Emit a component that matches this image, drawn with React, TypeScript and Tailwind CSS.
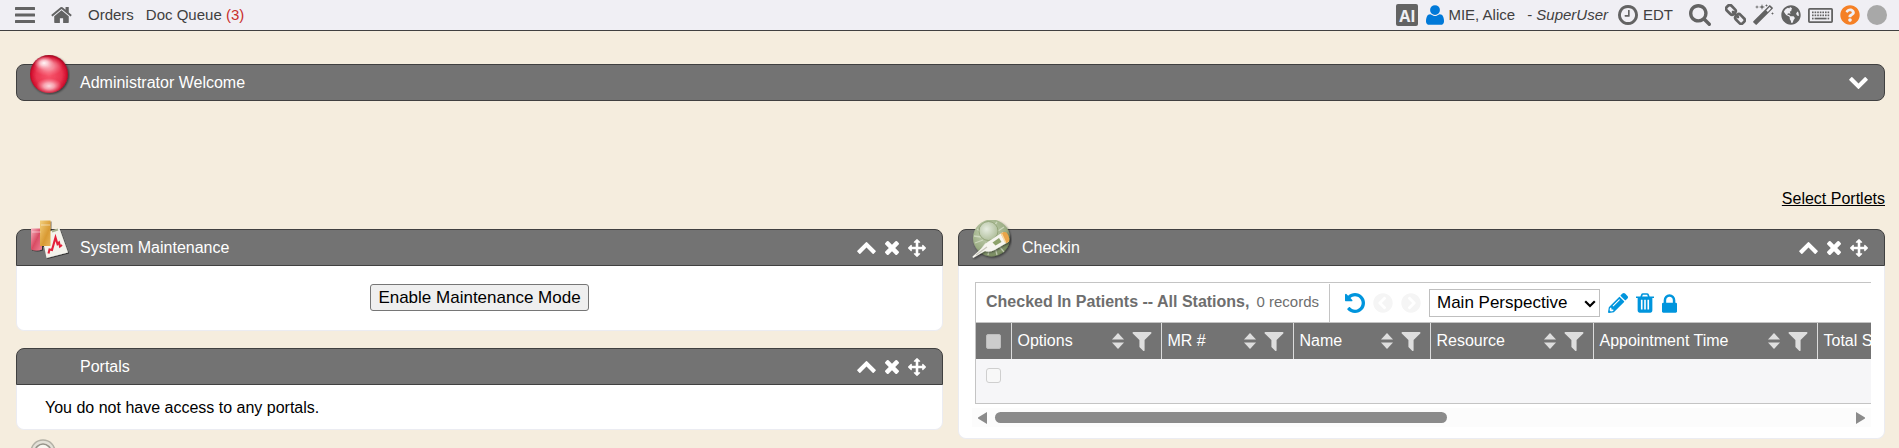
import React from "react";
import { FaChevronCircleLeft, FaChevronCircleRight, FaGlobeAmericas, FaPencilAlt, FaQuestionCircle } from "react-icons/fa";

type Glyph = { box: string; d: string };

const glyphs = {
  home: {
    box: "64 192 1664 1408",
    d: "M1472 992v480q0 26-19 45t-45 19h-384v-384h-256v384h-384q-26 0-45-19t-19-45v-480q0-1 .5-3t.5-3l575-474 575 474q1 2 1 6zm223-69l-62 74q-8 9-21 11h-3q-13 0-21-7l-692-577-692 577q-12 8-24 7-13-2-21-11l-62-74q-8-10-7-23.5t11-21.5l719-599q32-26 76-26t76 26l244 204v-195q0-14 9-23t23-9h192q14 0 23 9t9 23v408l219 182q10 8 11 21.5t-7 23.5z",
  },
  user: {
    box: "192 128 1408 1536",
    d: "M1600 1405q0 120-73 189.5t-194 69.5h-874q-121 0-194-69.5t-73-189.5q0-53 3.5-103.5t14-109 26.5-108.5 43-97.5 62-81 85.5-53.5 111.5-20q9 0 42 21.5t74.5 48 108 48 133.5 21.5 133.5-21.5 108-48 74.5-48 42-21.5q61 0 111.5 20t85.5 53.5 62 81 43 97.5 26.5 108.5 14 109 3.5 103.5zm-320-893q0 159-112.5 271.5t-271.5 112.5-271.5-112.5-112.5-271.5 112.5-271.5 271.5-112.5 271.5 112.5 112.5 271.5z",
  },
  clock: {
    box: "128 128 1536 1536",
    d: "M1024 544v448q0 14-9 23t-23 9h-320q-14 0-23-9t-9-23v-64q0-14 9-23t23-9h224v-352q0-14 9-23t23-9h64q14 0 23 9t9 23zm416 352q0-148-73-273t-198-198-273-73-273 73-198 198-73 273 73 273 198 198 273 73 273-73 198-198 73-273zm224 0q0 209-103 385.5t-279.5 279.5-385.5 103-385.5-103-279.5-279.5-103-385.5 103-385.5 279.5-279.5 385.5-103 385.5 103 279.5 279.5 103 385.5z",
  },
  search: {
    box: "64 128 1664 1664",
    d: "M1216 832q0-185-131.5-316.5t-316.5-131.5-316.5 131.5-131.5 316.5 131.5 316.5 316.5 131.5 316.5-131.5 131.5-316.5zm512 832q0 52-38 90t-90 38q-54 0-90-38l-343-342q-179 124-399 124-143 0-273.5-55.5t-225-150-150-225-55.5-273.5 55.5-273.5 150-225 225-150 273.5-55.5 273.5 55.5 225 150 150 225 55.5 273.5q0 220-124 399l343 343q37 37 37 90z",
  },
  chevronUp: {
    box: "90 480 1612 1035",
    d: "M1683 1331l-166 165q-19 19-45 19t-45-19l-531-531-531 531q-19 19-45 19t-45-19l-166-165q-19-19-19-45.5t19-45.5l742-741q19-19 45-19t45 19l742 741q19 19 19 45.5t-19 45.5z",
  },
  chevronDown: {
    box: "90 533 1612 1035",
    d: "M1683 808l-742 741q-19 19-45 19t-45-19l-742-741q-19-19-19-45.5t19-45.5l166-165q19-19 45-19t45 19l531 531 531-531q19-19 45-19t45 19l166 165q19 19 19 45.5t-19 45.5z",
  },
  close: {
    box: "302 366 1188 1188",
    d: "M1490 1322q0 40-28 68l-136 136q-28 28-68 28t-68-28l-294-294-294 294q-28 28-68 28t-68-28l-136-136q-28-28-28-68t28-68l294-294-294-294q-28-28-28-68t28-68l136-136q28-28 68-28t68 28l294 294 294-294q28-28 68-28t68 28l136 136q28 28 28 68t-28 68l-294 294 294 294q28 28 28 68z",
  },
  move: {
    box: "0 0 1792 1792",
    d: "M1792 896q0 26-19 45l-256 256q-19 19-45 19t-45-19-19-45v-128h-384v384h128q26 0 45 19t19 45-19 45l-256 256q-19 19-45 19t-45-19l-256-256q-19-19-19-45t19-45 45-19h128v-384h-384v128q0 26-19 45t-45 19-45-19l-256-256q-19-19-19-45t19-45l256-256q19-19 45-19t45 19 19 45v128h384v-384h-128q-26 0-45-19t-19-45 19-45l256-256q19-19 45-19t45 19l256 256q19 19 19 45t-19 45-45 19h-128v384h384v-128q0-26 19-45t45-19 45 19l256 256q19 19 19 45z",
  },
  undo: {
    box: "128 128 1536 1536",
    d: "M1664 896q0 156-61 298t-164 245-245 164-298 61q-172 0-327-72.5t-264-204.5q-7-10-6.5-22.5t8.5-20.5l137-138q10-9 25-9 16 2 23 12 73 95 179 147t225 52q104 0 198.5-40.5t163.5-109.5 109.5-163.5 40.5-198.5-40.5-198.5-109.5-163.5-163.5-109.5-198.5-40.5q-98 0-188 35.5t-160 101.5l137 138q31 30 14 69-17 40-59 40h-448q-26 0-45-19t-19-45v-448q0-42 40-59 39-17 69 14l130 129q107-101 244.5-156.5t284.5-55.5q156 0 298 61t245 164 164 245 61 298z",
  },
  filter: {
    box: "190 256 1412 1408",
    d: "M1595 295q17 41-14 70l-493 493v742q0 42-39 59-13 5-25 5-27 0-45-19l-256-256q-19-19-19-45v-486l-493-493q-31-29-14-70 17-39 59-39h1280q42 0 59 39z",
  },
  trash: {
    box: "192 128 1408 1536",
    d: "M704 1376v-704q0-14-9-23t-23-9h-64q-14 0-23 9t-9 23v704q0 14 9 23t23 9h64q14 0 23-9t9-23zm256 0v-704q0-14-9-23t-23-9h-64q-14 0-23 9t-9 23v704q0 14 9 23t23 9h64q14 0 23-9t9-23zm256 0v-704q0-14-9-23t-23-9h-64q-14 0-23 9t-9 23v704q0 14 9 23t23 9h64q14 0 23-9t9-23zm-544-992h448l-48-117q-7-9-17-11h-317q-10 2-17 11zm928 32v64q0 14-9 23t-23 9h-96v948q0 83-47 143.5t-113 60.5h-832q-66 0-113-58.5t-47-141.5v-952h-96q-14 0-23-9t-9-23v-64q0-14 9-23t23-9h309l70-167q15-37 54-63t79-26h320q40 0 79 26t54 63l70 167h309q14 0 23 9t9 23z",
  },
  lock: {
    box: "320 128 1152 1408",
    d: "M640 768h512v-192q0-106-75-181t-181-75-181 75-75 181v192zm832 96v576q0 40-28 68t-68 28h-960q-40 0-68-28t-28-68v-576q0-40 28-68t68-28h32v-192q0-184 132-316t316-132 316 132 132 316v192h32q40 0 68 28t28 68z",
  },
} satisfies Record<string, Glyph>;

function Icon({ name, className }: { name: keyof typeof glyphs; className: string }) {
  return (
    <svg viewBox={glyphs[name].box} fill="currentColor" fillRule="evenodd" className={className} aria-hidden="true">
      <path d={glyphs[name].d} />
    </svg>
  );
}

function BarsIcon() {
  return (
    <svg viewBox="0 0 20 16" className="h-4 w-5" fill="currentColor" aria-hidden="true">
      <rect width="20" height="3" rx="0.5" />
      <rect y="6.5" width="20" height="3" rx="0.5" />
      <rect y="13" width="20" height="3" rx="0.5" />
    </svg>
  );
}

function ChainIcon() {
  return (
    <svg viewBox="0 0 21 21" className="h-[21px] w-[21px]" fill="none" stroke="currentColor" strokeWidth="2.7" aria-hidden="true">
      <rect x="-4.9" y="-3.3" width="9.8" height="6.6" rx="2.4" transform="translate(5.9 5.9) rotate(45)" />
      <rect x="-4.9" y="-3.3" width="9.8" height="6.6" rx="2.4" transform="translate(15 15) rotate(45)" />
      <path d="M8 8l5 5" strokeLinecap="round" />
    </svg>
  );
}

function WandIcon() {
  return (
    <svg viewBox="0 0 21 21" className="h-[21px] w-[21px]" fill="currentColor" aria-hidden="true">
      <path
        fillRule="evenodd"
        d="M16.2 1.4q.6-.6 1.2 0l2.2 2.2q.6.6 0 1.200L3.800 20.600q-.6.6-1.200 0l-2.200-2.200q-.6-.6 0-1.200zM13.300 6.500l1.500 1.500 3.300-3.400-1.500-1.500z"
      />
      <path d="M4 1l.5 1.500L6 3l-1.500.5L4 5l-.5-1.500L2 3l1.500-.5zM9 0l.7 2.300L12 3l-2.300.7L9 6l-.7-2.300L6 3l2.300-.7zM13.500 0l.4 1.100 1.100.4-1.100.4-.4 1.100-.4-1.100-1.100-.4 1.100-.4zM19.500 8l.4 1.100 1.100.4-1.100.4-.4 1.100-.4-1.100-1.100-.4 1.100-.4z" />
    </svg>
  );
}

function KeyboardIcon() {
  const keys = [4, 6.6, 9.2, 11.8, 14.4, 17, 19.6];
  return (
    <svg viewBox="0 0 25 15" className="h-[15px] w-[25px]" fill="currentColor" aria-hidden="true">
      <rect x="0.9" y="0.9" width="23.2" height="13.2" rx="0.8" fill="none" stroke="currentColor" strokeWidth="1.8" />
      {keys.map((x) => (
        <rect key={x} x={x} y="3.5" width="1.6" height="1.7" />
      ))}
      {keys.map((x) => (
        <rect key={x} x={x} y="6.5" width="1.6" height="1.7" />
      ))}
      <rect x="4" y="9.7" width="1.6" height="1.7" />
      <rect x="6.6" y="9.7" width="12" height="1.7" />
      <rect x="19.6" y="9.7" width="1.6" height="1.7" />
    </svg>
  );
}

function SortIcon() {
  return (
    <svg viewBox="0 0 12 16" className="h-4 w-3 shrink-0" fill="#dedede" aria-hidden="true">
      <path d="M6 0l6 6.5H0z" />
      <path d="M0 9.5h12L6 16z" />
    </svg>
  );
}

function OrbArt() {
  return (
    <svg viewBox="0 0 40 40" className="h-10 w-10" aria-hidden="true">
      <defs>
        <radialGradient id="orbBase" cx="0.5" cy="0.52" r="0.52">
          <stop offset="0" stopColor="#f8566c" />
          <stop offset="0.65" stopColor="#e93550" />
          <stop offset="0.88" stopColor="#d3112f" />
          <stop offset="1" stopColor="#9c0e22" />
        </radialGradient>
        <radialGradient id="orbGlow">
          <stop offset="0" stopColor="#fff" stopOpacity="0.95" />
          <stop offset="0.4" stopColor="#ffdfe4" stopOpacity="0.75" />
          <stop offset="1" stopColor="#ff9fae" stopOpacity="0" />
        </radialGradient>
        <filter id="orbShade" x="-20%" y="-20%" width="150%" height="150%">
          <feDropShadow dx="0.8" dy="1" stdDeviation="0.9" floodOpacity="0.6" />
        </filter>
      </defs>
      <circle cx="19" cy="19" r="19" fill="url(#orbBase)" filter="url(#orbShade)" />
      <ellipse cx="18" cy="11" rx="15" ry="10" fill="url(#orbGlow)" opacity="0.6" />
      <ellipse cx="14" cy="8" rx="10" ry="7" fill="url(#orbGlow)" />
      <ellipse cx="19" cy="31" rx="13" ry="8" fill="url(#orbGlow)" opacity="0.85" />
    </svg>
  );
}

function ReportArt() {
  return (
    <svg viewBox="0 0 40 40" className="h-10 w-10" aria-hidden="true">
      <defs>
        <linearGradient id="redBox" x1="0" x2="1" y2="1">
          <stop offset="0" stopColor="#f7b4bf" />
          <stop offset="0.5" stopColor="#d94c64" />
          <stop offset="1" stopColor="#ef8397" />
        </linearGradient>
        <linearGradient id="goldBox" x1="0" x2="1" y2="1">
          <stop offset="0" stopColor="#f3cf7c" />
          <stop offset="0.6" stopColor="#d99a33" />
          <stop offset="1" stopColor="#e8b45a" />
        </linearGradient>
        <filter id="boxShade" x="-20%" y="-20%" width="150%" height="150%">
          <feDropShadow dx="1" dy="1" stdDeviation="0.7" floodOpacity="0.55" />
        </filter>
      </defs>
      <g filter="url(#boxShade)">
        <path d="M11.5 14L29.500 8.500 38 32.500 16.500 38z" fill="#f4f3ec" />
        <path d="M1 8.500h11V29.500q-5.500 2-11 0z" fill="url(#redBox)" />
        <rect x="10" y="0.5" width="10.5" height="25.5" fill="url(#goldBox)" />
      </g>
      <path d="M2 12h8.500M11 5h9" stroke="#fff" strokeOpacity="0.5" />
      <path d="M18.500 33.500l1-4 2.500.5 3.500-12.500 2 6.500 1.500-1.500 1 4 2-1.500" fill="none" stroke="#e4203a" strokeWidth="2.1" />
      <path d="M22 11.500l6-2" stroke="#a8b18e" strokeWidth="2" />
    </svg>
  );
}

function ThermometerArt() {
  return (
    <svg viewBox="0 0 40 40" className="h-10 w-10" aria-hidden="true">
      <defs>
        <radialGradient id="leafDisc" cx="0.4" cy="0.35" r="0.7">
          <stop offset="0" stopColor="#c9d4b8" />
          <stop offset="0.7" stopColor="#9cae84" />
          <stop offset="1" stopColor="#6d8054" />
        </radialGradient>
        <radialGradient id="leafBall" cx="0.4" cy="0.4" r="0.7">
          <stop offset="0" stopColor="#e6ece0" />
          <stop offset="1" stopColor="#a9b993" />
        </radialGradient>
        <filter id="discShade" x="-20%" y="-20%" width="150%" height="150%">
          <feDropShadow dx="1" dy="1.2" stdDeviation="0.8" floodOpacity="0.55" />
        </filter>
      </defs>
      <circle cx="19.5" cy="18" r="18.5" fill="url(#leafDisc)" filter="url(#discShade)" />
      <path
        d="M5 9l5 4M2 16l7 1M3 23l8-3M8 31l6-8M16 35l2-9M25 35l-2-8M32 32l-5-6M11 3l2 4M25 2l-3 4M32 7l-6 4M37 21l-8 1"
        stroke="#dbe3cd"
        strokeWidth="1.3"
        opacity="0.7"
      />
      <circle cx="16.5" cy="11" r="9.5" fill="url(#leafBall)" stroke="#8b9d70" strokeWidth="0.8" />
      <g filter="url(#discShade)">
        <path d="M0.5 36.500L10 28q3-5 8-7.500L31 12l6 9.500L22.500 30q-5 2.500-9.500 1L1 38z" fill="#f6f5ef" />
        <path d="M28.500 13.500q3-2.500 6-1 3.500 4.500 2.500 9l-3 1.700z" fill="#e9a548" />
      </g>
      <path d="M29.500 13.500l4 9" stroke="#f6d9a4" strokeWidth="1.5" />
      <path d="M20.500 22.500l6.500-4.500 2.500 4-6 3.500z" fill="#8ea36c" />
      <path d="M4 35l11-8" stroke="#c9c7bb" strokeWidth="1.2" />
    </svg>
  );
}

function DiscArt() {
  return (
    <svg viewBox="0 0 40 40" className="h-10 w-10" aria-hidden="true">
      <circle cx="13" cy="13" r="12" fill="#e3e1d8" stroke="#b3b1a6" strokeWidth="1.6" />
      <circle cx="13" cy="13" r="8" fill="#f7f6f0" stroke="#96948a" strokeWidth="1.6" />
    </svg>
  );
}

function TitleBar({ title, art, rounded, children }: { title: string; art?: React.ReactNode; rounded: string; children: React.ReactNode }) {
  return (
    <header className={`relative flex h-[37px] items-center justify-between border border-[#404040] bg-[#737373] pr-4 pl-[63px] text-white ${rounded}`}>
      {art && <div className="absolute -top-[10px] left-[13px]">{art}</div>}
      <h2>{title}</h2>
      <div className="flex items-center gap-[9px]">{children}</div>
    </header>
  );
}

function Portlet({ title, art, children }: { title: string; art?: React.ReactNode; children: React.ReactNode }) {
  return (
    <section>
      <TitleBar title={title} art={art} rounded="rounded-t-lg">
        <button aria-label="Collapse"><Icon name="chevronUp" className="h-3 w-[19px]" /></button>
        <button aria-label="Close"><Icon name="close" className="h-[14px] w-[14px]" /></button>
        <button aria-label="Move"><Icon name="move" className="h-[18px] w-[18px]" /></button>
      </TitleBar>
      <div className="rounded-b-lg border border-t-0 border-[#ebecf2] bg-white">{children}</div>
    </section>
  );
}

const columns = [
  { label: "Options", width: "w-[150px]" },
  { label: "MR #", width: "w-[132px]" },
  { label: "Name", width: "w-[137px]" },
  { label: "Resource", width: "w-[163px]" },
  { label: "Appointment Time", width: "w-[224px]" },
];

function CheckinGrid() {
  return (
    <div className="px-[13px] pt-4 pb-[11px]">
      <div className="ml-[3px] overflow-hidden border-y border-l border-[#c4c4c4]">
        <div className="flex h-10 items-end border-b border-[#c4c4c4]">
          <div className="flex h-[38px] items-center border-r border-[#c4c4c4] px-[10px] pb-[2px] whitespace-nowrap text-[#6e6e6e]">
            <strong>Checked In Patients -- All Stations,</strong>
            <span className="ml-[7px] text-[15px]">0 records</span>
          </div>
          <div className="flex h-[38px] items-center pl-[15px] text-[#0095dd]">
            <button aria-label="Refresh"><Icon name="undo" className="h-5 w-5" /></button>
            <button aria-label="Previous page" className="ml-2 text-[#f5f5f5]"><FaChevronCircleLeft size={20} /></button>
            <button aria-label="Next page" className="ml-2 text-[#f5f5f5]"><FaChevronCircleRight size={20} /></button>
            <div className="relative ml-2">
              <select aria-label="Perspective" className="h-7 w-[171px] appearance-none border border-[#bfbfbf] bg-white pl-[7px] text-[17px] leading-5 text-black">
                <option>Main Perspective</option>
              </select>
              <svg viewBox="0 0 12 8" className="pointer-events-none absolute top-[11px] right-1 h-2 w-3" fill="none" stroke="#000" strokeWidth="2.2" aria-hidden="true">
                <path d="M1.2 1.2L6 6l4.800-4.800" />
              </svg>
            </div>
            <button aria-label="Edit perspective" className="ml-2"><FaPencilAlt size={20} /></button>
            <button aria-label="Delete perspective" className="ml-2"><Icon name="trash" className="h-5 w-[18px]" /></button>
            <button aria-label="Lock perspective" className="ml-2"><Icon name="lock" className="h-[19px] w-[15px]" /></button>
          </div>
        </div>
        <table className="w-[1703px] table-fixed border-collapse">
          <thead>
            <tr className="h-9 bg-[#737373] text-white">
              <th className="w-[35px] border-r border-[#dcdcdc] p-0">
                <input type="checkbox" aria-label="Select all" className="mx-auto block h-[15px] w-[15px] appearance-none rounded-xs border border-[#bdbdbd] bg-[#cccccc]" />
              </th>
              {columns.map((c) => (
                <th key={c.label} className={`${c.width} border-r border-[#dcdcdc] p-0 font-normal`}>
                  <div className="flex items-center pr-[9px] pl-[6px]">
                    <span className="flex-1 text-left whitespace-nowrap">{c.label}</span>
                    <SortIcon />
                    <button aria-label={`Filter ${c.label}`} className="ml-2 text-[#dedede]"><Icon name="filter" className="h-[19px] w-5" /></button>
                  </div>
                </th>
              ))}
              <th className="p-0 pl-[6px] text-left font-normal">Total S</th>
            </tr>
          </thead>
          <tbody>
            <tr className="h-11 bg-[#f6f6f8]">
              <td className="p-0 pt-[9px] align-top">
                <input type="checkbox" aria-label="Select row" className="mx-auto block h-[15px] w-[15px] appearance-none rounded-[3px] border border-[#cfcfcf] bg-[#f8f8f8]" />
              </td>
              <td colSpan={6} />
            </tr>
          </tbody>
        </table>
      </div>
      <div className="mt-1 flex h-[19px] items-center bg-[#fcfcfc] px-[6px] text-[#8b8b8b]">
        <svg viewBox="0 0 9 12" className="h-3 w-[9px]" fill="currentColor" aria-hidden="true"><path d="M9 0v12L0 6.500v-1z" /></svg>
        <div className="mx-2 flex-1">
          <div className="h-[11px] w-[53%] rounded-full bg-[#8b8b8b]" />
        </div>
        <svg viewBox="0 0 9 12" className="h-3 w-[9px]" fill="currentColor" aria-hidden="true"><path d="M0 0v12l9-5.500v-1z" /></svg>
      </div>
    </div>
  );
}

export default function App() {
  return (
    <div className="h-screen overflow-hidden bg-[#f5edde] font-['Liberation_Sans',Arial,sans-serif] text-base leading-[18px] text-black">
      <nav className="flex h-[31px] items-center justify-between border-b border-[#404040] bg-[#f0eff4] pr-3 pl-[15px] text-[15px] text-[#404040]">
        <div className="flex items-center">
          <button aria-label="Menu" className="text-[#636363]"><BarsIcon /></button>
          <a href="#home" aria-label="Home" className="ml-4 text-[#636363]"><Icon name="home" className="h-[18px] w-[21px]" /></a>
          <a href="#orders" className="ml-4">Orders</a>
          <a href="#queue" className="ml-3">Doc Queue <span className="text-[#c9302c]">(3)</span></a>
        </div>
        <div className="flex items-center">
          <button className="h-[22px] w-[22px] rounded-xs bg-[#636363] font-['Open_Sans',sans-serif] text-base font-bold text-[#f0eff4]">AI</button>
          <Icon name="user" className="ml-2 h-5 w-[18px] text-[#0079d8]" />
          <a href="#user" className="ml-1">MIE, Alice</a>
          <span className="ml-3">- <em>SuperUser</em></span>
          <Icon name="clock" className="ml-[10px] h-5 w-5 text-[#636363]" />
          <span className="ml-[5px]">EDT</span>
          <div className="ml-4 flex items-center gap-[7px] text-[#636363]">
            <button aria-label="Search" className="mr-[7px]"><Icon name="search" className="h-[22px] w-[22px]" /></button>
            <button aria-label="Links" className="pb-[2px]"><ChainIcon /></button>
            <button aria-label="Tools" className="pb-[2px]"><WandIcon /></button>
            <button aria-label="Language"><FaGlobeAmericas size={20} /></button>
            <button aria-label="Keyboard shortcuts"><KeyboardIcon /></button>
            <button aria-label="Help" className="text-[#f58025]"><FaQuestionCircle size={20} /></button>
            <button aria-label="Status" className="h-5 w-5 rounded-full bg-[#a8a8a8]" />
          </div>
        </div>
      </nav>
      <main className="pt-[33px] pr-[14px] pl-4">
        <TitleBar title="Administrator Welcome" art={<OrbArt />} rounded="rounded-lg">
          <button aria-label="Expand"><Icon name="chevronDown" className="h-3 w-[19px]" /></button>
        </TitleBar>
        <div className="mt-[89px] mb-[21px] flex justify-end">
          <a href="#portlets" className="underline">Select Portlets</a>
        </div>
        <div className="grid grid-cols-2 items-start gap-[15px]">
          <div className="flex flex-col gap-[17px]">
            <Portlet title="System Maintenance" art={<ReportArt />}>
              <div className="flex justify-center pt-[18px] pb-[19px]">
                <button className="h-[27px] rounded-[3px] border border-[#767676] bg-[#efefef] px-[7px] text-[17px]">Enable Maintenance Mode</button>
              </div>
            </Portlet>
            <Portlet title="Portals">
              <p className="px-7 pt-[11px] pb-[9px] leading-6">You do not have access to any portals.</p>
            </Portlet>
            <div className="relative h-[37px]">
              <div className="absolute -top-2 left-[14px]"><DiscArt /></div>
            </div>
          </div>
          <Portlet title="Checkin" art={<ThermometerArt />}>
            <CheckinGrid />
          </Portlet>
        </div>
      </main>
    </div>
  );
}
